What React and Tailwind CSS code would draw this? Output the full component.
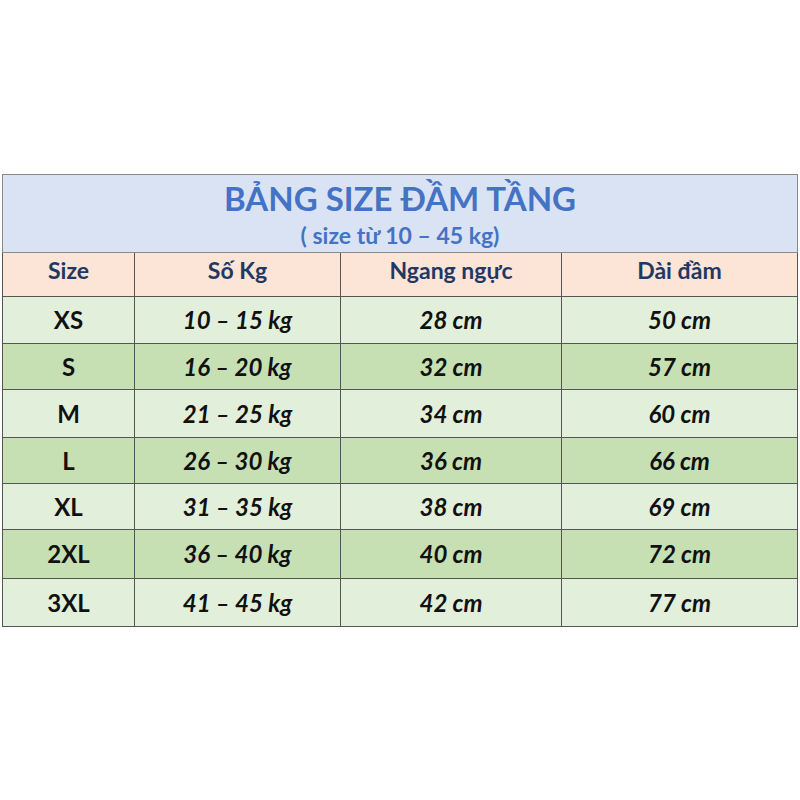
const rows = [
  { size: "XS", kg: "10 – 15 kg", chest: "28 cm", len: "50 cm", h: "h-[47px]" },
  { size: "S", kg: "16 – 20 kg", chest: "32 cm", len: "57 cm", h: "h-[46px]" },
  { size: "M", kg: "21 – 25 kg", chest: "34 cm", len: "60 cm", h: "h-[48px]" },
  { size: "L", kg: "26 – 30 kg", chest: "36 cm", len: "66 cm", h: "h-[46px]" },
  { size: "XL", kg: "31 – 35 kg", chest: "38 cm", len: "69 cm", h: "h-[46px]" },
  { size: "2XL", kg: "36 – 40 kg", chest: "40 cm", len: "72 cm", h: "h-[49px]" },
  { size: "3XL", kg: "41 – 45 kg", chest: "42 cm", len: "77 cm", h: "h-[48px]" },
];

const App = () => {
  return (
    <div className="w-[800px] h-[800px] bg-white pt-[174px] pl-[2px] font-['Lato','Open_Sans',sans-serif]">
      <table className="w-[795px] table-fixed border-collapse border border-[#6b6b6b]">
        <colgroup>
          <col className="w-[132px]" />
          <col className="w-[206px]" />
          <col className="w-[221px]" />
          <col className="w-[236px]" />
        </colgroup>
        <thead>
          {/* tiêu đề bảng */}
          <tr className="bg-[#dae3f3]">
            <th colSpan={4} className="h-[78px] border border-[#8a8a8a] p-0 align-top">
              <div className="pt-[3px] text-[33px] leading-[41px] font-bold text-[#4472c4]">BẢNG SIZE ĐẦM TẦNG</div>
              <div className="pt-[3px] text-[23px] leading-[27px] font-bold text-[#4472c4]">( size từ 10 – 45 kg)</div>
            </th>
          </tr>
          <tr className="bg-[#fce4d6] text-[23px] font-bold text-[#1f3864]">
            <th className="h-[44px] border border-[#555] p-0 pb-[8px]">Size</th>
            <th className="border border-[#555] p-0 pb-[8px]">Số Kg</th>
            <th className="border border-[#555] p-0 pb-[8px]">Ngang ngực</th>
            <th className="border border-[#555] p-0 pb-[8px]">Dài đầm</th>
          </tr>
        </thead>
        <tbody className="text-[24px] font-bold text-[#111]">
          {rows.map((r, i) => (
            <tr key={r.size} className={i % 2 === 0 ? "bg-[#e2efda]" : "bg-[#c6e0b4]"}>
              <td className={`${r.h} border border-[#555] p-0 text-center`}>{r.size}</td>
              <td className="border border-[#555] p-0 text-center italic">{r.kg}</td>
              <td className="border border-[#555] p-0 text-center italic">{r.chest}</td>
              <td className="border border-[#555] p-0 text-center italic">{r.len}</td>
            </tr>
          ))}
        </tbody>
      </table>
    </div>
  );
};

export default App;
